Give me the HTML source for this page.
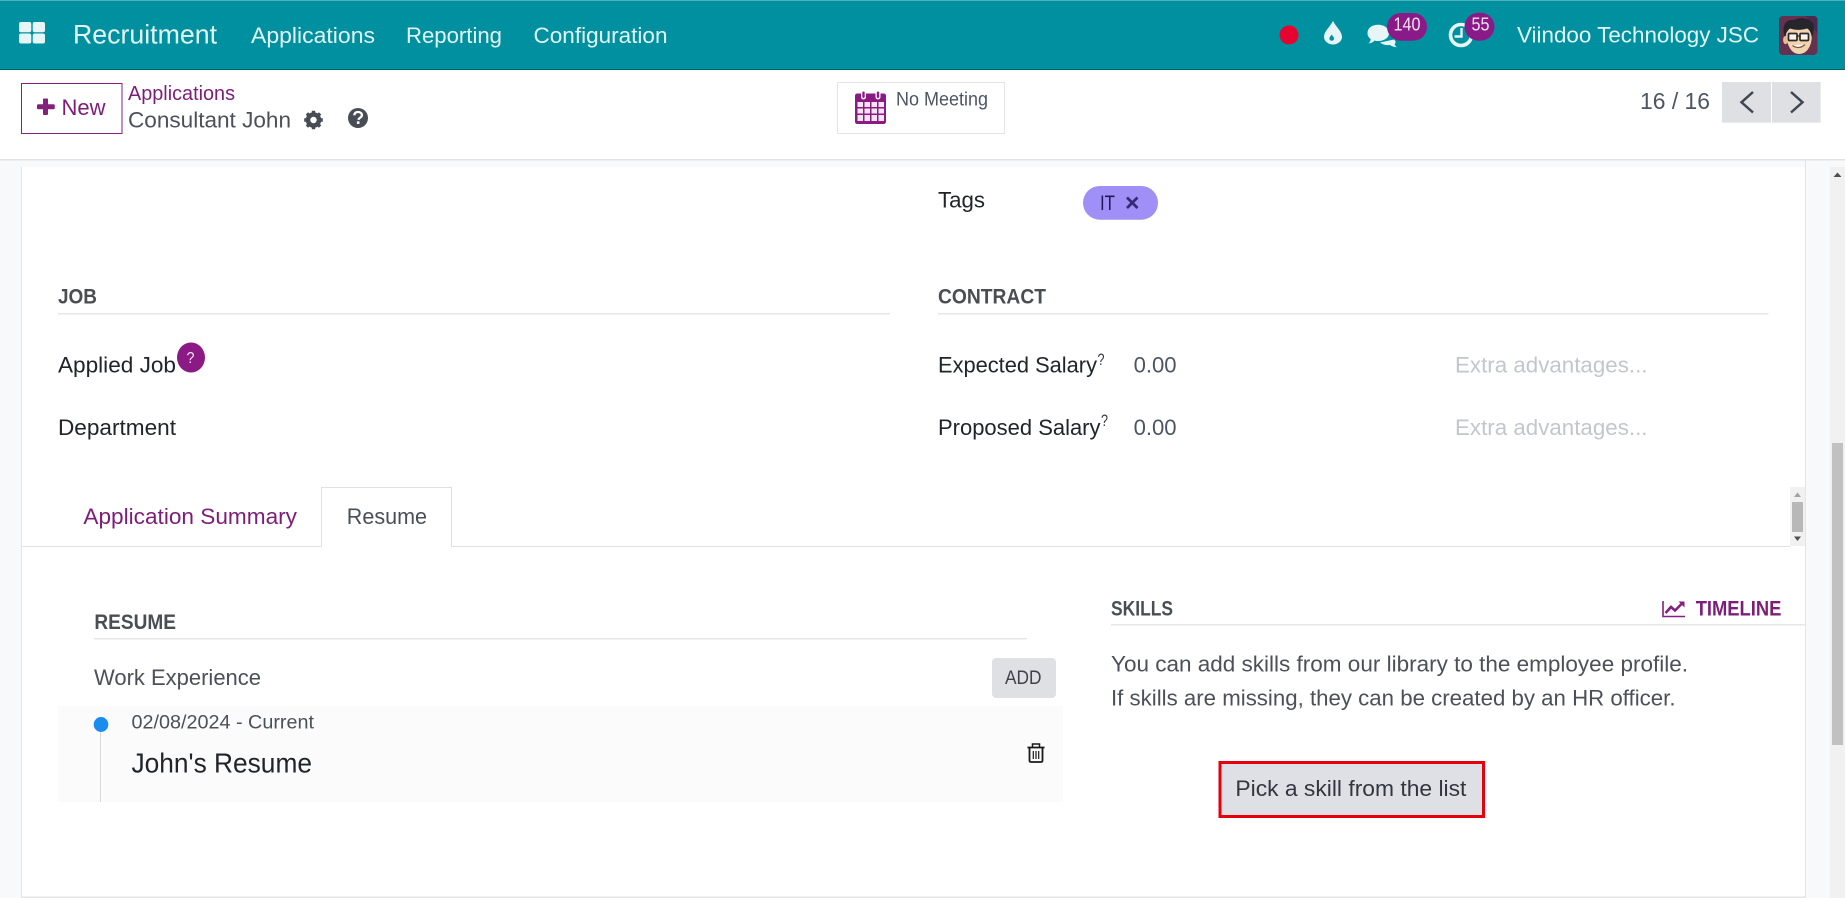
<!DOCTYPE html>
<html><head><meta charset="utf-8"><title>Recruitment</title>
<style>
html,body{margin:0;padding:0;width:1845px;height:898px;overflow:hidden;background:#f8f9fa}
svg{display:block;font-family:"Liberation Sans",Arial,sans-serif}
.b{font-weight:bold}
</style></head><body>
<svg xmlns="http://www.w3.org/2000/svg" width="1845" height="898" viewBox="0 0 1845 898">
<rect width="1845" height="898" fill="#f8f9fa"/>
<!-- navbar -->
<rect width="1845" height="70" fill="#00909f"/>
<rect width="1845" height="1" fill="#4fb3bd"/>
<rect y="69" width="1845" height="1" fill="#00626d"/>
<g fill="#e6f6f7">
<rect x="19" y="22" width="12.300" height="10.300" rx="2"/><rect x="32.700" y="22" width="12.300" height="10.300" rx="2"/>
<rect x="19" y="33.500" width="12.300" height="10" rx="2"/><rect x="32.700" y="33.500" width="12.300" height="10" rx="2"/>
</g>
<g fill="#e2f5f6">
<text x="73" y="43.500" font-size="26.500" textLength="144" lengthAdjust="spacingAndGlyphs">Recruitment</text>
<text x="251" y="43" font-size="22" textLength="124" lengthAdjust="spacingAndGlyphs">Applications</text>
<text x="406" y="43" font-size="22" textLength="96" lengthAdjust="spacingAndGlyphs">Reporting</text>
<text x="533.500" y="43" font-size="22" textLength="134" lengthAdjust="spacingAndGlyphs">Configuration</text>
<text x="1517" y="42.700" font-size="22" textLength="242" lengthAdjust="spacingAndGlyphs">Viindoo Technology JSC</text>
</g>
<circle cx="1289" cy="35" r="9.500" fill="#e4042f"/>
<path d="M1333 20.700C1335.500 26.500 1342 31 1342 37C1342 41 1338 44.500 1333 44.500C1328 44.500 1324 41 1324 37C1324 31 1330.500 26.500 1333 20.700Z" fill="#e6f6f7"/>
<path d="M1331.700 34.500C1332.500 36 1334 37 1334 38.600C1334 39.900 1333 40.700 1331.700 40.700C1330.400 40.700 1329.400 39.900 1329.400 38.600C1329.400 37 1331 36 1331.700 34.500Z" fill="#00909f"/>
<path d="M1378 24.700C1384 24.700 1389 28 1389 33C1389 38 1384 41 1378 41C1376.500 41 1375.500 41 1374.500 40.500C1373 42.500 1371 43 1368.500 43.500C1370 42 1370.700 40.500 1370.700 39C1368.500 37.500 1367.500 35.500 1367.500 33C1367.500 28 1372 24.700 1378 24.700Z" fill="#e6f6f7"/>
<path d="M1380 42.500L1394 39.500C1396 41 1396 43 1394.500 44.200C1395 45.500 1396 46.500 1397 47.300C1394 47 1391.500 46.300 1390 45C1386 45.500 1382.500 44.500 1380 42.500Z" fill="#e6f6f7"/>
<rect x="1387" y="13" width="40" height="27.700" rx="13.800" fill="#8b1a89"/>
<text x="1393.500" y="30.700" font-size="18" fill="#f2e3f2" textLength="27" lengthAdjust="spacingAndGlyphs">140</text>
<circle cx="1461" cy="35" r="10.500" fill="none" stroke="#e6f6f7" stroke-width="3.600"/>
<path d="M1461.500 28V36.500H1454.500" fill="none" stroke="#e6f6f7" stroke-width="2.400"/>
<rect x="1464.500" y="12.700" width="30" height="28" rx="14" fill="#8b1a89"/>
<text x="1471.500" y="30.700" font-size="18" fill="#f2e3f2" textLength="18" lengthAdjust="spacingAndGlyphs">55</text>
<!-- avatar -->
<rect x="1779" y="16" width="38.500" height="39" rx="4" fill="#66304f"/>
<path d="M1817.500 20V34L1806 16H1813Q1817.500 16 1817.500 20Z" fill="#4a2a4e"/>
<path d="M1786 32C1786 44 1791 54 1799 54C1807 54 1812 46 1812 34C1812 28 1804 26 1798 26C1792 26 1786 27 1786 32Z" fill="#f1d3b0"/>
<ellipse cx="1785.500" cy="40" rx="2.400" ry="4.200" fill="#e4bd98"/>
<path d="M1785 37C1781 27 1785 19 1794 20C1800 16.500 1810 18 1813.500 24C1814.500 30 1813 34 1812 38C1811 33 1810 30 1807 28.500C1801 30.500 1794 30 1790 28.500C1787.500 30.500 1786 33 1785 37Z" fill="#25252b"/>
<g fill="#fbf3e8" stroke="#2a2a2e" stroke-width="1.700"><rect x="1788.500" y="33.500" width="8.500" height="7" rx="1"/><rect x="1800" y="33.500" width="8.500" height="7" rx="1"/></g>
<path d="M1797 36H1800" stroke="#2a2a2e" stroke-width="1.300"/>
<path d="M1792.500 45.500Q1799 50 1805 44.500" fill="#fff" stroke="#8a5040" stroke-width="1.200"/>
<!-- control panel -->
<rect y="70" width="1845" height="89" fill="#fff"/>
<rect y="159" width="1845" height="1.500" fill="#e0e2e5"/>
<rect x="21.500" y="83.500" width="100.500" height="50" fill="#fff" stroke="#85207f" stroke-width="1"/>
<path d="M43.800 98.500H47.200Q48 98.500 48 99.300V104.200H53.500Q54.800 104.200 54.800 105.500V108Q54.800 109.200 53.500 109.200H48V114Q48 115 47 115H43.800Q43 115 43 114V109.200H38.300Q37 109.200 37 108V105.500Q37 104.200 38.300 104.200H43V99.300Q43 98.500 43.800 98.500Z" fill="#85207f"/>
<text x="61.500" y="115" font-size="22" fill="#7d1d78" textLength="44" lengthAdjust="spacingAndGlyphs">New</text>
<text x="128" y="100" font-size="20" fill="#7d1d78" textLength="107" lengthAdjust="spacingAndGlyphs">Applications</text>
<text x="128" y="127.700" font-size="22" fill="#4b505a" textLength="163" lengthAdjust="spacingAndGlyphs">Consultant John</text>
<!-- gear -->
<g fill="none" stroke="#474c55">
<circle cx="313.500" cy="120" r="5.500" stroke-width="4.500"/>
<path d="M313.500 110.700V129.300M304.200 120H322.800M306.900 113.400L320.100 126.600M320.100 113.400L306.900 126.600" stroke-width="3.400" stroke-dasharray="3.200 12.400 3.200"/>
</g>
<!-- help -->
<circle cx="358" cy="118" r="10" fill="#474c55"/>
<path d="M354.300 115.300C354.500 113 356 112 358 112C360.200 112 361.900 113.300 361.900 115.200C361.900 117.400 359 117.600 358.300 119.800" fill="none" stroke="#fff" stroke-width="2.300"/>
<rect x="356.900" y="121.300" width="2.600" height="2.600" fill="#fff"/>
<!-- meeting -->
<rect x="837.500" y="82.500" width="167" height="51" fill="#fff" stroke="#e2e4e7"/>
<path d="M857.500 93.500H883.500Q886 93.500 886 96V121.500Q886 124 883.500 124H857.500Q855 124 855 121.500V96Q855 93.500 857.500 93.500Z" fill="#8b1a85"/>
<rect x="861" y="90.500" width="5" height="9" rx="2.500" fill="#fff"/><rect x="875.500" y="90.500" width="5" height="9" rx="2.500" fill="#fff"/>
<rect x="862.300" y="91.500" width="2.400" height="6.500" rx="1.200" fill="#8b1a85"/><rect x="876.800" y="91.500" width="2.400" height="6.500" rx="1.200" fill="#8b1a85"/>
<g fill="#f6e6f5">
<rect x="857.500" y="102" width="5.500" height="5"/><rect x="864.500" y="102" width="5.500" height="5"/><rect x="871.500" y="102" width="5.500" height="5"/><rect x="878.500" y="102" width="5.500" height="5"/>
<rect x="857.500" y="108.500" width="5.500" height="5"/><rect x="864.500" y="108.500" width="5.500" height="5"/><rect x="871.500" y="108.500" width="5.500" height="5"/><rect x="878.500" y="108.500" width="5.500" height="5"/>
<rect x="857.500" y="115" width="5.500" height="6"/><rect x="864.500" y="115" width="5.500" height="6"/><rect x="871.500" y="115" width="5.500" height="6"/><rect x="878.500" y="115" width="5.500" height="6"/>
</g>
<text x="896" y="105.300" font-size="19.500" fill="#4c5563" textLength="92" lengthAdjust="spacingAndGlyphs">No Meeting</text>
<!-- pager -->
<text x="1640" y="109" font-size="23" fill="#4c5563" textLength="70" lengthAdjust="spacingAndGlyphs">16 / 16</text>
<rect x="1722" y="82" width="49" height="40.700" fill="#dee0e4"/>
<rect x="1772" y="82" width="48.600" height="40.700" fill="#dee0e4"/>
<path d="M1753 92L1741.500 102.300L1753 112.500" fill="none" stroke="#3f4650" stroke-width="2.500"/>
<path d="M1791 92L1802.500 102.300L1791 112.500" fill="none" stroke="#3f4650" stroke-width="2.500"/>
<!-- sheet -->
<rect x="22" y="167" width="1783" height="731" fill="#fff"/>
<rect x="21" y="167" width="1" height="731" fill="#e2e4e7"/>
<rect x="1805" y="160" width="1" height="738" fill="#e2e4e7"/>
<!-- main scrollbar -->
<rect x="1830" y="167" width="15" height="731" fill="#f1f1f1"/>
<path d="M1837.500 172.500L1841.500 177H1833.500Z" fill="#505050"/>
<rect x="1832" y="443" width="11" height="302" fill="#c1c1c1"/>
<!-- tags -->
<text x="938" y="207.700" font-size="22" fill="#212529" textLength="47" lengthAdjust="spacingAndGlyphs">Tags</text>
<rect x="1083" y="186" width="75" height="33.700" rx="16.800" fill="#a08ff6"/>
<text x="1100" y="210" font-size="21" fill="#1f1a55" textLength="15" lengthAdjust="spacingAndGlyphs">IT</text>
<path d="M1127 197.500L1137.500 208M1137.500 197.500L1127 208" stroke="#352a75" stroke-width="2.700"/>
<!-- JOB / CONTRACT -->
<text class="b" x="58" y="303.300" font-size="21" fill="#4a4d52" textLength="39" lengthAdjust="spacingAndGlyphs">JOB</text>
<rect x="58" y="313" width="832" height="1.500" fill="#e6e7e9"/>
<text class="b" x="938" y="303.300" font-size="21" fill="#4a4d52" textLength="108" lengthAdjust="spacingAndGlyphs">CONTRACT</text>
<rect x="938" y="313" width="830.500" height="1.500" fill="#e6e7e9"/>
<text x="58" y="372.700" font-size="22" fill="#212529" textLength="118" lengthAdjust="spacingAndGlyphs">Applied Job</text>
<ellipse cx="191" cy="357.500" rx="14" ry="15" fill="#8b1a85"/>
<text x="186.500" y="363" font-size="16" fill="#f3e3f2" textLength="8" lengthAdjust="spacingAndGlyphs">?</text>
<text x="58" y="435" font-size="22" fill="#212529" textLength="118" lengthAdjust="spacingAndGlyphs">Department</text>
<text x="938" y="372.700" font-size="22" fill="#212529" textLength="159" lengthAdjust="spacingAndGlyphs">Expected Salary</text>
<text x="1097.500" y="365" font-size="16.500" fill="#33373d" textLength="7" lengthAdjust="spacingAndGlyphs">?</text>
<text x="1133.600" y="372.700" font-size="22" fill="#4c5563" textLength="43" lengthAdjust="spacingAndGlyphs">0.00</text>
<text x="1455" y="372.700" font-size="22" fill="#c3c6ca" textLength="192.500" lengthAdjust="spacingAndGlyphs">Extra advantages...</text>
<text x="938" y="435" font-size="22" fill="#212529" textLength="162.500" lengthAdjust="spacingAndGlyphs">Proposed Salary</text>
<text x="1101" y="426" font-size="16.500" fill="#33373d" textLength="7" lengthAdjust="spacingAndGlyphs">?</text>
<text x="1133.600" y="435" font-size="22" fill="#4c5563" textLength="43" lengthAdjust="spacingAndGlyphs">0.00</text>
<text x="1455" y="435" font-size="22" fill="#c3c6ca" textLength="192.500" lengthAdjust="spacingAndGlyphs">Extra advantages...</text>
<!-- tabs -->
<rect x="22" y="546" width="1768" height="1" fill="#dfe1e4"/>
<text x="83.400" y="524" font-size="22" fill="#7d1d78" textLength="213.600" lengthAdjust="spacingAndGlyphs">Application Summary</text>
<path d="M321.500 547V487.500H451.500V547" fill="#fff" stroke="#dfe1e4"/>
<rect x="322" y="545" width="129" height="3" fill="#fff"/>
<text x="346.800" y="524" font-size="22" fill="#4a4f57" textLength="80.200" lengthAdjust="spacingAndGlyphs">Resume</text>
<!-- tabs scrollbar -->
<rect x="1790" y="487" width="15" height="59" fill="#f1f1f1"/>
<path d="M1797.500 492.500L1801 497H1794Z" fill="#a3a3a3"/>
<rect x="1792" y="502" width="11" height="30" fill="#b8b8b8"/>
<path d="M1797.500 541L1801 536.500H1794Z" fill="#505050"/>
<!-- resume -->
<text class="b" x="94.400" y="629" font-size="21" fill="#4a4d52" textLength="81.600" lengthAdjust="spacingAndGlyphs">RESUME</text>
<rect x="94" y="638" width="933" height="1.500" fill="#e6e7e9"/>
<text x="94" y="685" font-size="22" fill="#4c5058" textLength="167" lengthAdjust="spacingAndGlyphs">Work Experience</text>
<rect x="992" y="658" width="64" height="40" rx="4" fill="#dee0e4"/>
<text x="1005" y="684" font-size="19.500" fill="#3e434b" textLength="36.500" lengthAdjust="spacingAndGlyphs">ADD</text>
<rect x="58" y="706" width="1005" height="96" fill="#fbfbfb"/>
<rect x="100" y="724" width="1" height="78" fill="#d9dadc"/>
<ellipse cx="101" cy="724.500" rx="7.300" ry="7.500" fill="#1a8cf0"/>
<text x="131.500" y="728.700" font-size="19.500" fill="#4c5058" textLength="182.500" lengthAdjust="spacingAndGlyphs">02/08/2024 - Current</text>
<text x="131.500" y="772.300" font-size="27.500" fill="#212529" textLength="180.500" lengthAdjust="spacingAndGlyphs">John's Resume</text>
<g fill="none" stroke="#1a1a1a">
<path d="M1027.500 747.500H1044.500" stroke-width="1.800"/>
<path d="M1032.500 747V744H1039.500V747" stroke-width="1.500"/>
<path d="M1029.500 748V760.500Q1029.500 762 1031 762H1041Q1042.500 762 1042.500 760.500V748" stroke-width="1.800"/>
<path d="M1033.300 751V759M1036 751V759M1038.700 751V759" stroke-width="1.200"/>
</g>
<!-- skills -->
<text class="b" x="1111" y="615.300" font-size="21" fill="#4a4d52" textLength="62" lengthAdjust="spacingAndGlyphs">SKILLS</text>
<rect x="1111" y="624" width="694" height="1.500" fill="#e6e7e9"/>
<path d="M1663 601V616.500H1685" fill="none" stroke="#85207f" stroke-width="1.600"/>
<path d="M1665.500 613L1671 607L1675 610.500L1682.500 603" fill="none" stroke="#85207f" stroke-width="2.600"/>
<path d="M1678.500 601.500H1684.500V607.500Z" fill="#85207f"/>
<text class="b" x="1695.700" y="615.300" font-size="21" fill="#7d1d78" textLength="85.700" lengthAdjust="spacingAndGlyphs">TIMELINE</text>
<text x="1111" y="671.700" font-size="22" fill="#4c5058" textLength="577" lengthAdjust="spacingAndGlyphs">You can add skills from our library to the employee profile.</text>
<text x="1111" y="705.700" font-size="22" fill="#4c5058" textLength="564.500" lengthAdjust="spacingAndGlyphs">If skills are missing, they can be created by an HR officer.</text>
<rect x="1220" y="762.500" width="263.500" height="54" fill="#dee0e6" stroke="#e6000e" stroke-width="3"/>
<text x="1235.400" y="796" font-size="22" fill="#33363d" textLength="231" lengthAdjust="spacingAndGlyphs">Pick a skill from the list</text>
<rect x="21" y="896.500" width="1785" height="1.500" fill="#e2e4e7"/>
</svg>
</body></html>
